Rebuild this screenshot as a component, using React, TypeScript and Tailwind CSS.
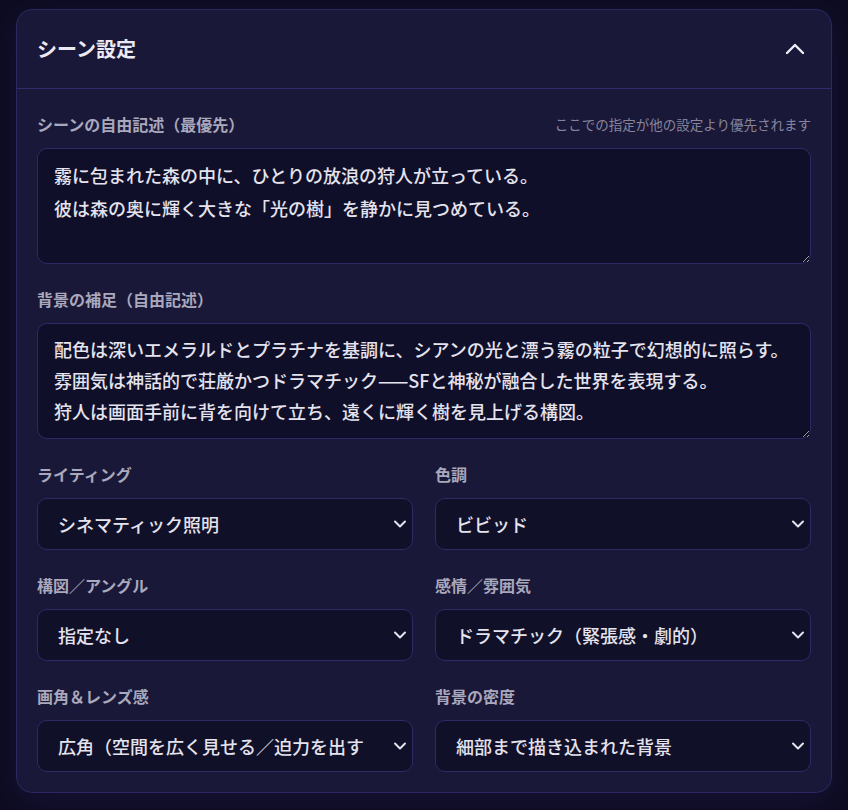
import { useState } from 'react';

const font = { fontFamily: '"Noto Sans CJK JP", "Noto Sans", sans-serif' };

const selects = [
  {
    label: 'ライティング',
    value: 'シネマティック照明',
    options: ['指定なし', 'シネマティック照明', '自然光', 'ネオン照明'],
  },
  {
    label: '色調',
    value: 'ビビッド',
    options: ['指定なし', 'ビビッド', 'パステル', 'モノクロ'],
  },
  {
    label: '構図／アングル',
    value: '指定なし',
    options: ['指定なし', '俯瞰', 'ローアングル', 'クローズアップ'],
  },
  {
    label: '感情／雰囲気',
    value: 'ドラマチック（緊張感・劇的）',
    options: ['指定なし', 'ドラマチック（緊張感・劇的）', '穏やか', '幻想的'],
  },
  {
    label: '画角＆レンズ感',
    value: '広角（空間を広く見せる／迫力を出す）',
    options: ['指定なし', '広角（空間を広く見せる／迫力を出す）', '望遠', '標準'],
  },
  {
    label: '背景の密度',
    value: '細部まで描き込まれた背景',
    options: ['指定なし', '細部まで描き込まれた背景', 'シンプルな背景', 'ぼかした背景'],
  },
];

const SelectField = ({ label, value, options }: { label: string; value: string; options: string[] }) => {
  const [v, setV] = useState(value);
  return (
    <div className="flex flex-col">
      <label className="text-[16px] leading-[20px] font-semibold text-[#a9a8bd] mb-[14px]">{label}</label>
      <div className="relative">
        <select
          value={v}
          onChange={(e) => setV(e.target.value)}
          className="appearance-none w-full h-[52px] rounded-[10px] border border-[#2c2966] bg-[#111029] pl-5 pr-12 text-[18px] font-medium text-[#e4e3ee] outline-none"
          style={font}
        >
          {options.map((o) => (
            <option key={o} value={o}>
              {o}
            </option>
          ))}
        </select>
        <svg
          className="pointer-events-none absolute right-[6px] top-1/2 -translate-y-1/2"
          width="14"
          height="9"
          viewBox="0 0 14 9"
          fill="none"
          stroke="#e4e3ee"
          strokeWidth={2}
          strokeLinecap="round"
          strokeLinejoin="round"
        >
          <path d="M2 2l5 5 5-5" />
        </svg>
      </div>
    </div>
  );
};

const App = () => {
  const [open, setOpen] = useState(true);
  const [scene, setScene] = useState(
    '霧に包まれた森の中に、ひとりの放浪の狩人が立っている。\n彼は森の奥に輝く大きな「光の樹」を静かに見つめている。'
  );
  const [bg, setBg] = useState(
    '配色は深いエメラルドとプラチナを基調に、シアンの光と漂う霧の粒子で幻想的に照らす。\n雰囲気は神話的で荘厳かつドラマチック——SFと神秘が融合した世界を表現する。\n狩人は画面手前に背を向けて立ち、遠くに輝く樹を見上げる構図。'
  );

  return (
    <div className="min-h-screen bg-[#0d0c21] pt-[9px] px-4" style={font}>
      <div className="rounded-[16px] border border-[#2b2862] bg-[#1a1838] shadow-[0_8px_30px_rgba(40,30,90,0.35)]">
        <div className="flex items-center justify-between h-[79px] pl-5 pr-[26px] border-b border-[#2f2b6c]">
          <h2 className="text-[20px] font-bold text-[#ebeaf3]">シーン設定</h2>
          <button onClick={() => setOpen(!open)} className="p-0">
            <svg width="20" height="12" viewBox="0 0 20 12" fill="none" stroke="#f0f0f6" strokeWidth={2.4} strokeLinecap="round" strokeLinejoin="round">
              <path d="M2 10l8-8 8 8" />
            </svg>
          </button>
        </div>

        {open && (
          <div className="px-5 pt-[25px] pb-[20px] flex flex-col gap-[25px]">
            <div className="flex flex-col">
              <div className="flex items-center justify-between mb-[14px]">
                <label className="text-[16px] leading-[20px] font-semibold text-[#a9a8bd]">シーンの自由記述（最優先）</label>
                <span className="text-[13.5px] text-[#86859c]">ここでの指定が他の設定より優先されます</span>
              </div>
              <textarea
                value={scene}
                onChange={(e) => setScene(e.target.value)}
                className="block w-full h-[116px] resize-y rounded-[10px] border border-[#2c2966] bg-[#100f29] px-4 pt-[10px] text-[18px] font-medium leading-[33px] text-[#e4e3ee] outline-none"
                style={font}
              />
            </div>

            <div className="flex flex-col">
              <label className="text-[16px] leading-[20px] font-semibold text-[#a9a8bd] mb-[14px]">背景の補足（自由記述）</label>
              <textarea
                value={bg}
                onChange={(e) => setBg(e.target.value)}
                className="block w-full h-[116px] resize-y rounded-[10px] border border-[#2c2966] bg-[#100f29] px-4 pt-[10px] text-[18px] font-medium leading-[31px] text-[#e4e3ee] outline-none"
                style={font}
              />
            </div>

            <div className="grid grid-cols-2 gap-x-[22px] gap-y-[25px]">
              {selects.map((s) => (
                <SelectField key={s.label} {...s} />
              ))}
            </div>
          </div>
        )}
      </div>
    </div>
  );
};

export default App;
